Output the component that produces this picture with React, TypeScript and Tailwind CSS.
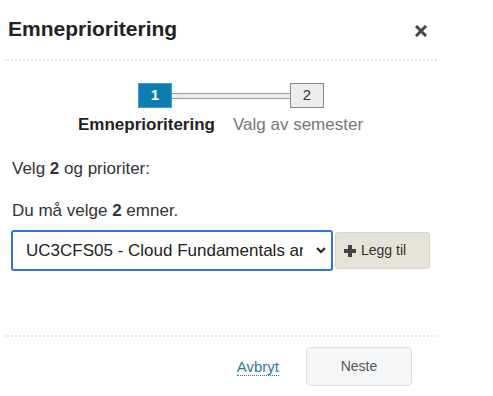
import React from "react";

export default function App() {
  return (
    <div
      className="w-[493px] h-[396px] bg-white relative overflow-hidden text-[#333]"
      style={{ fontFamily: '"Liberation Sans", Arial, sans-serif' }}
    >
      <div className="w-[441px] flex flex-col">
        {/* Header */}
        <div className="h-[59px] flex items-start justify-between pl-[8px] pr-[14px] pt-[15px]">
          <h1 className="text-[21px] font-bold leading-[27px] text-[#222]">Emneprioritering</h1>
          <svg width="12" height="12" viewBox="0 0 12 12" className="mt-[10px]">
            <path d="M2 2 L10 10 M10 2 L2 10" stroke="#444" strokeWidth="3" strokeLinecap="square" />
          </svg>
        </div>
        <div className="mx-[4px] border-t-2 border-dotted border-[#e8e8e8]" />

        {/* Stepper */}
        <div className="mt-[22px] flex items-center ml-[138px]">
          <div className="w-[34px] h-[25px] bg-[#0b7db0] border border-[#3d9fd0] flex items-center justify-center text-white font-bold text-[15px]">
            1
          </div>
          <div className="w-[118px] h-[6px] border-y border-[#9b9590] bg-[#ededed]" />
          <div className="w-[34px] h-[25px] bg-[#ececec] border border-[#8c8580] flex items-center justify-center text-[#333] text-[15px]">
            2
          </div>
        </div>
        <div className="flex ml-[78px] gap-[18px] mt-[7px] text-[17px] leading-[20px]">
          <span className="font-bold text-[#222]">Emneprioritering</span>
          <span className="text-[#777]">Valg av semester</span>
        </div>

        {/* Body */}
        <div className="pl-[12px] mt-[24px] text-[17px] leading-[20px] text-[#333]">
          Velg <b>2</b> og prioriter:
        </div>
        <div className="pl-[12px] mt-[22px] text-[17px] leading-[20px] text-[#333]">
          Du må velge <b>2</b> emner.
        </div>
        <div className="flex items-center mt-[9px] ml-[11px]">
          <div className="relative w-[322px] h-[41px]">
            <select
              className="appearance-none w-full h-full border-2 border-[#2f73e0] rounded-[3px] bg-white pl-[13px] pr-[28px] text-[17px] text-[#222] outline-none"
              style={{ fontFamily: '"Liberation Sans", Arial, sans-serif' }}
              defaultValue="a"
            >
              <option value="a">UC3CFS05 - Cloud Fundamentals and Services</option>
            </select>
            <svg
              width="10"
              height="7"
              viewBox="0 0 10 7"
              className="absolute right-[7px] top-[17px] pointer-events-none"
            >
              <path d="M1 1 L5 5 L9 1" stroke="#222" strokeWidth="2" fill="none" />
            </svg>
          </div>
          <button className="ml-[2px] w-[95px] h-[37px] bg-[#e5e3d8] border border-[#d6d4c9] rounded-[3px] flex items-center pl-[8px] text-[14px] text-[#333]">
            <svg width="12" height="12" viewBox="0 0 12 12" className="mr-[5px]">
              <path d="M6 0 V12 M0 6 H12" stroke="#444" strokeWidth="4" />
            </svg>
            Legg til
          </button>
        </div>

        {/* Footer */}
        <div className="mx-[4px] mt-[64px] border-t-2 border-dotted border-[#e8e8e8]" />
        <div className="flex items-center justify-end mt-[10px] pr-[29px]">
          <a className="text-[15px] text-[#2b7b99] border-b border-dotted border-[#2b7b99] leading-[17px] mr-[27px]">
            Avbryt
          </a>
          <button className="w-[106px] h-[39px] bg-[#f5f6f8] border border-[#dcdee2] rounded-[4px] text-[14px] text-[#555]">
            Neste
          </button>
        </div>
      </div>
    </div>
  );
}
